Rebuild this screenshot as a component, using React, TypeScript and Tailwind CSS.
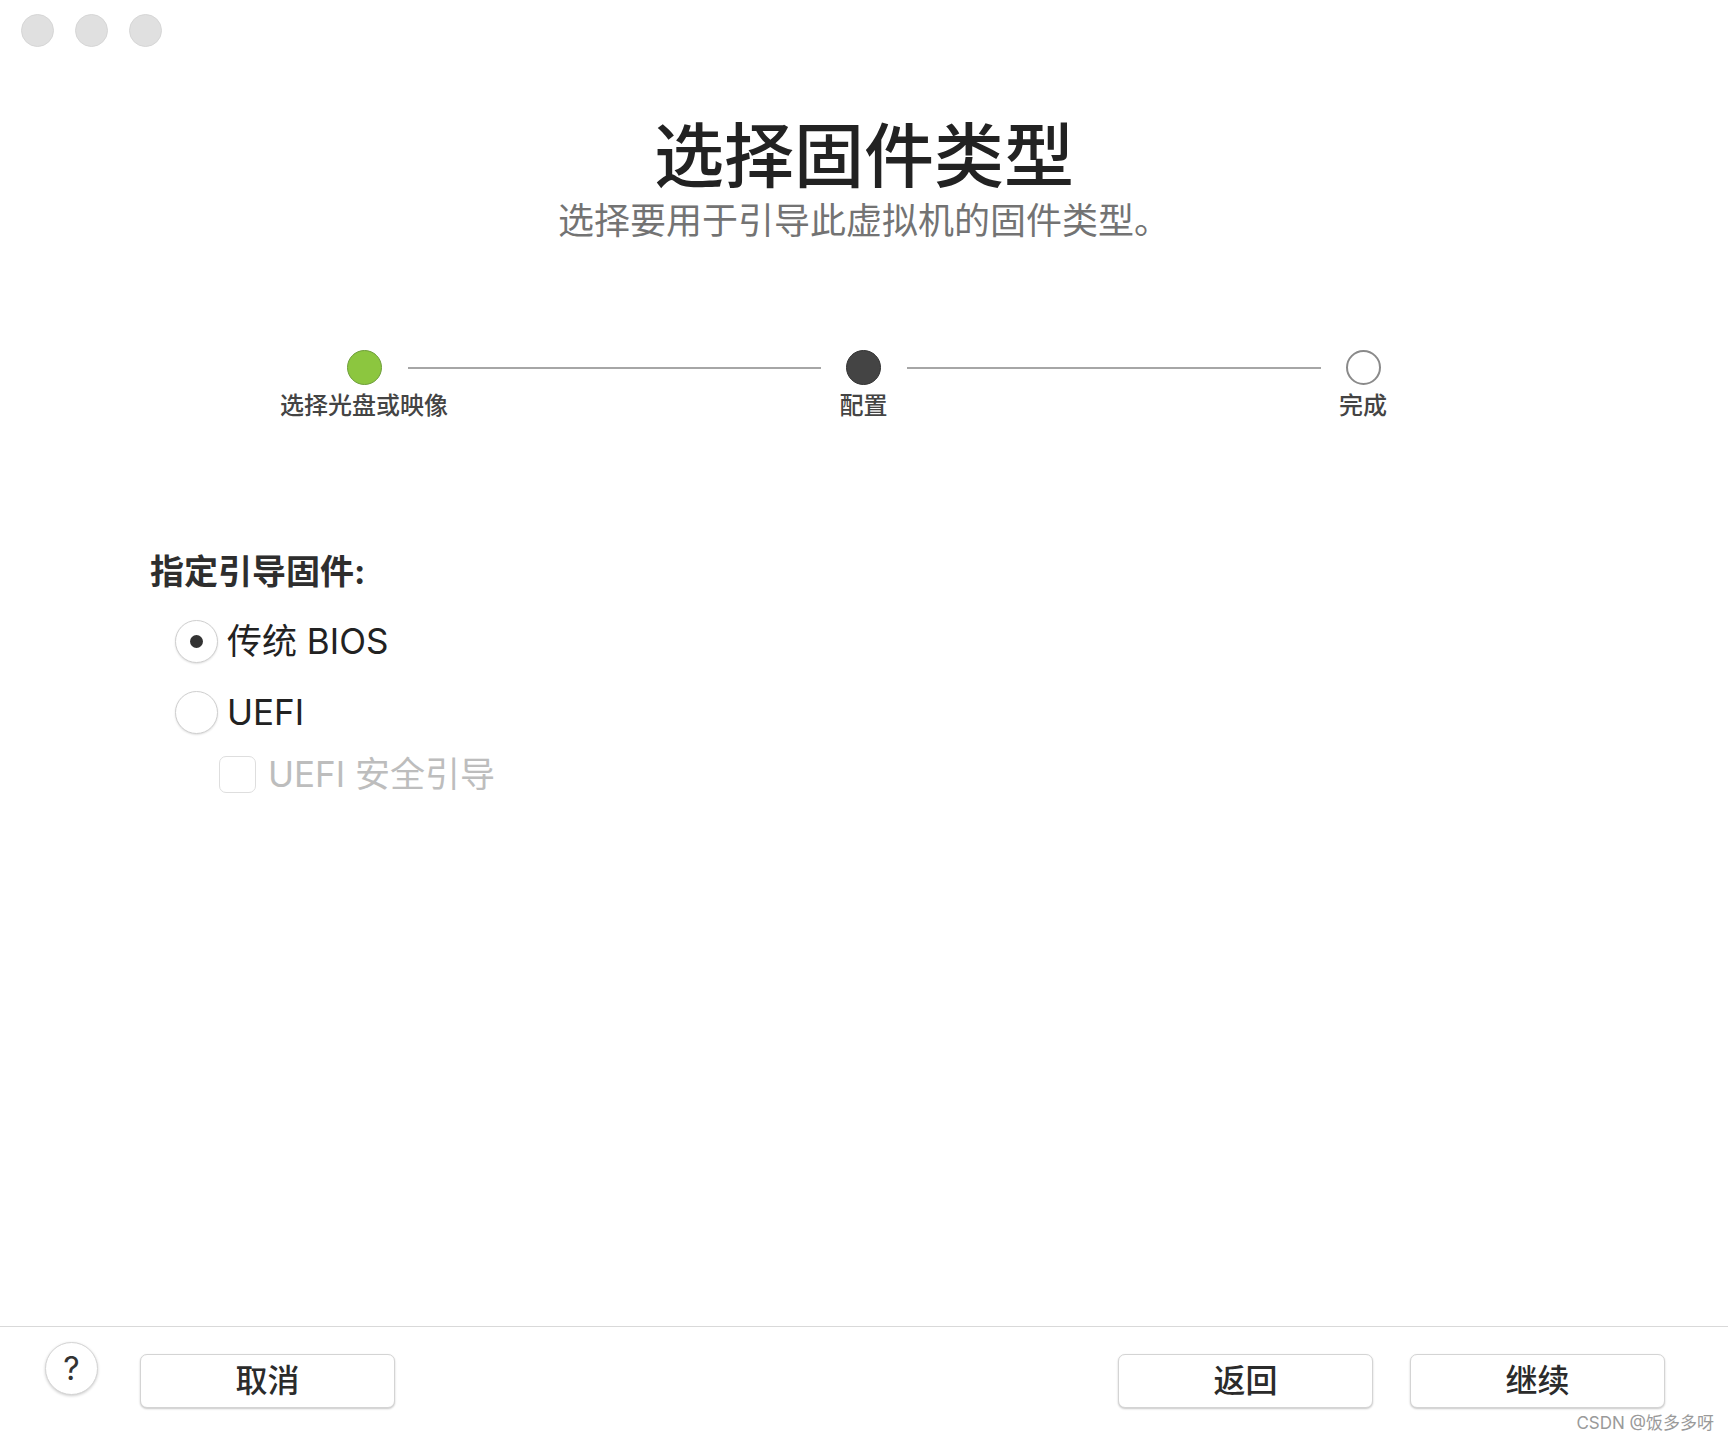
const STEPS = [
  { label: '选择光盘或映像', state: 'done' },
  { label: '配置', state: 'current' },
  { label: '完成', state: 'todo' },
]

function StepDot({ state }: { state: string }) {
  if (state === 'done') return <div className="w-[35px] h-[35px] rounded-full bg-[#8cc63f] border border-[#6e9e3a] shrink-0" />
  if (state === 'current') return <div className="w-[35px] h-[35px] rounded-full bg-[#444] border border-[#333] shrink-0" />
  return <div className="w-[35px] h-[35px] rounded-full bg-white border-2 border-[#8a8a8a] shrink-0" />
}

function Radio({ checked }: { checked: boolean }) {
  return (
    <div className="w-[43px] h-[43px] rounded-full bg-white border border-[#cfcfcf] shadow-[0_1px_2px_rgba(0,0,0,0.12)] flex items-center justify-center shrink-0">
      {checked && <div className="w-[13px] h-[13px] rounded-full bg-[#333]" />}
    </div>
  )
}

function FooterButton({ children }: { children: React.ReactNode }) {
  return (
    <button className="w-[255px] h-[54px] rounded-[7px] bg-white border border-[#d4d4d4] shadow-[0_1px_2px_rgba(0,0,0,0.22)] text-[32px] leading-none font-medium text-[#2b2b2b] flex items-center justify-center">
      {children}
    </button>
  )
}

export default function App() {
  return (
    <div className="relative w-[1728px] h-[1440px] bg-white flex flex-col font-['Inter','Noto_Sans_CJK_SC',sans-serif] overflow-hidden">
      {/* window controls */}
      <div className="flex gap-[21px] pl-[21px] pt-[14px]">
        <div className="w-[33px] h-[33px] rounded-full bg-[#e0e0e0] border border-[#d6d6d6]" />
        <div className="w-[33px] h-[33px] rounded-full bg-[#e0e0e0] border border-[#d6d6d6]" />
        <div className="w-[33px] h-[33px] rounded-full bg-[#e0e0e0] border border-[#d6d6d6]" />
      </div>

      <h1 className="mt-[75px] text-center text-[70px] leading-none font-medium text-[#222]">选择固件类型</h1>
      <p className="mt-[11px] text-center text-[36px] leading-none text-[#737373]">选择要用于引导此虚拟机的固件类型。</p>

      {/* stepper */}
      <div className="mt-[111px] w-[1034px] self-center ml-[-1px]">
        <div className="flex items-center">
          <StepDot state={STEPS[0].state} />
          <div className="flex-1 h-[2px] bg-[#a6a6a6] ml-[26px] mr-[25px]" />
          <StepDot state={STEPS[1].state} />
          <div className="flex-1 h-[2px] bg-[#a6a6a6] ml-[26px] mr-[25px]" />
          <StepDot state={STEPS[2].state} />
        </div>
        <div className="flex mt-[9px]">
          {STEPS.map((s, i) => (
            <div key={s.label} className={i < STEPS.length - 1 ? 'flex flex-1' : 'flex'}>
              <div className="w-[35px] flex justify-center">
                <span className="whitespace-nowrap text-[24px] leading-none font-medium text-[#444]">{s.label}</span>
              </div>
              {i < STEPS.length - 1 && <div className="flex-1 ml-[26px] mr-[25px]" />}
            </div>
          ))}
        </div>
      </div>

      {/* firmware options */}
      <div className="mt-[137px] pl-[150px] flex flex-col">
        <div className="text-[34px] leading-none font-bold text-[#2e2e2e]">指定引导固件:</div>
        <div className="mt-[31px] pl-[25px] flex items-center gap-[9px]">
          <Radio checked />
          <span className="text-[35px] leading-none text-[#222]">传统 BIOS</span>
        </div>
        <div className="mt-[28px] pl-[25px] flex items-center gap-[9px]">
          <Radio checked={false} />
          <span className="text-[35px] leading-none text-[#222]">UEFI</span>
        </div>
        <div className="mt-[22px] pl-[69px] flex items-center gap-[12px]">
          <div className="w-[37px] h-[37px] rounded-[7px] border border-[#dedede] bg-white" />
          <span className="text-[35px] leading-none text-[#bdbdbd]">UEFI 安全引导</span>
        </div>
      </div>

      <div className="flex-1" />

      {/* footer */}
      <div className="h-px bg-[#d9d9d9]" />
      <div className="h-[113px] flex items-start pt-[15px] pl-[45px] pr-[63px]">
        <button className="w-[53px] h-[53px] rounded-full bg-white border border-[#d4d4d4] shadow-[0_1px_3px_rgba(0,0,0,0.2)] text-[32px] leading-none text-[#333] flex items-center justify-center">?</button>
        <div className="ml-[42px] mt-[12px]">
          <FooterButton>取消</FooterButton>
        </div>
        <div className="flex-1" />
        <div className="mt-[12px] flex gap-[37px]">
          <FooterButton>返回</FooterButton>
          <FooterButton>继续</FooterButton>
        </div>
      </div>

      <div className="absolute right-[14px] bottom-[8px] text-[17px] leading-none text-[#9a9a9a]">CSDN @饭多多呀</div>
    </div>
  )
}
